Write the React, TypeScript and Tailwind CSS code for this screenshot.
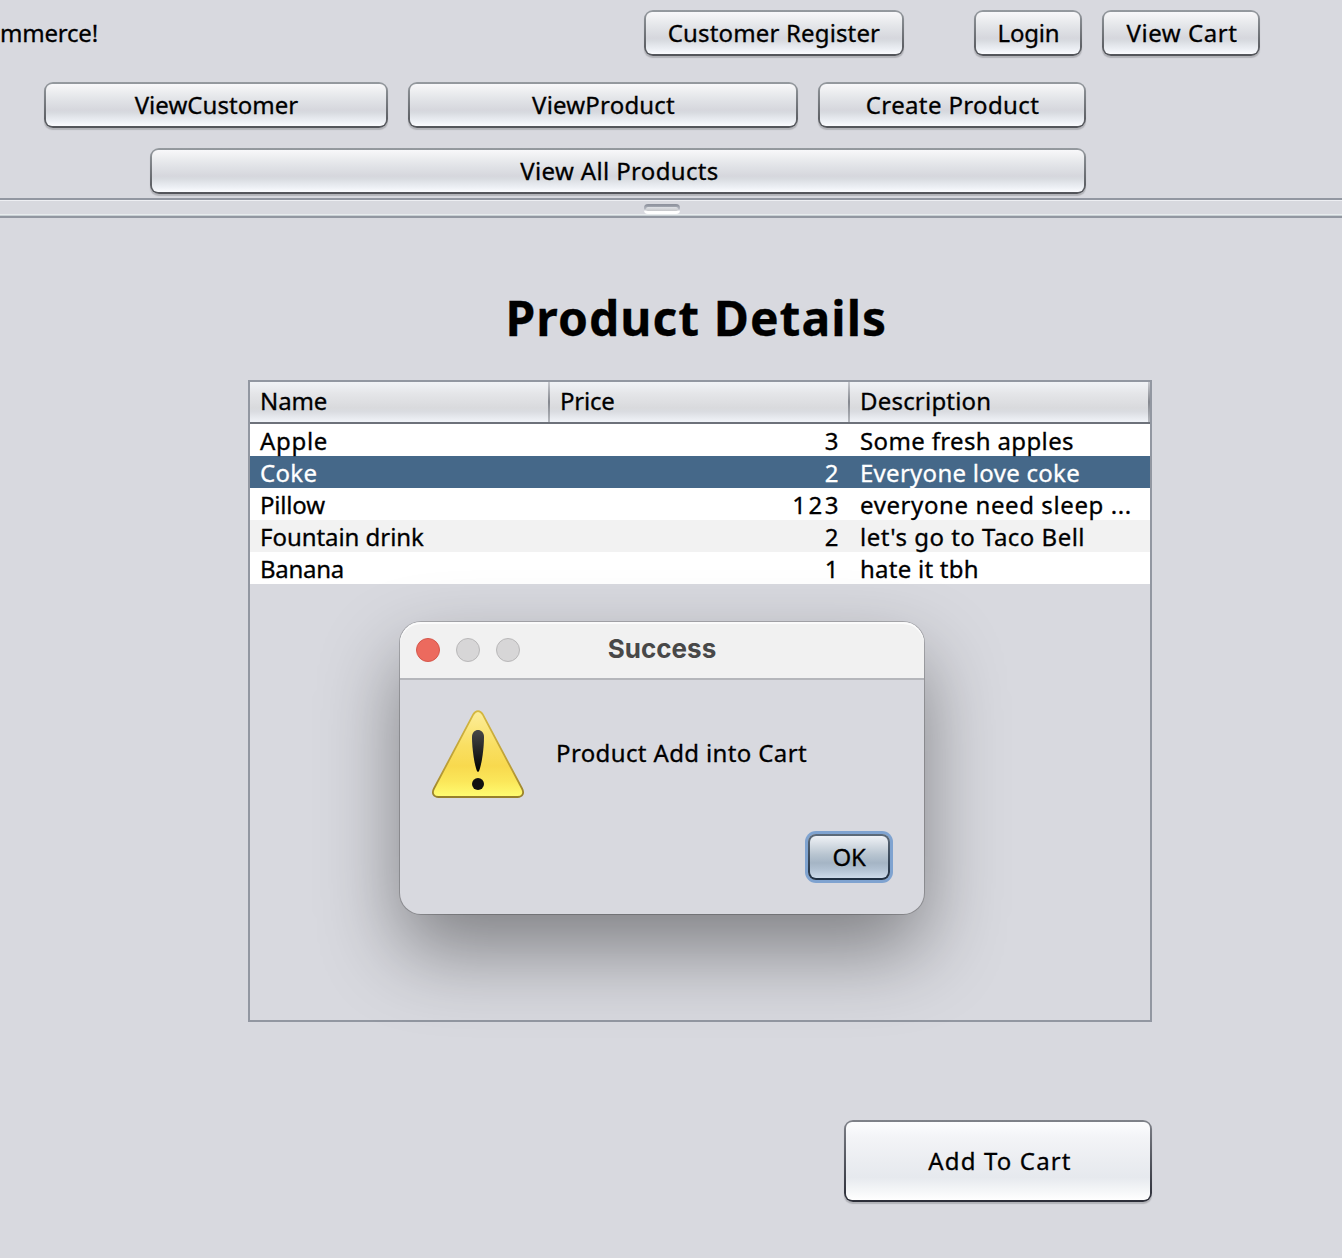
import type { ReactNode } from "react";

const frames = {
  normal:
    "rounded-[9px] bg-linear-to-b from-[#959a9f] to-[#525459] p-[2px] shadow-[0_2px_1px_-0.5px_#b2b3b8]",
  light:
    "rounded-[9px] bg-linear-to-b from-[#7f8289] to-[#2c2e38] p-[2px] shadow-[0_2px_1px_-0.5px_#b2b3b8]",
  focused:
    "rounded-[8px] bg-linear-to-b from-[#5d6b7a] to-[#1f2f42] p-[2px] shadow-[0_0_0_3px_#7fa3d0]",
};

const fills = {
  normal:
    "bg-[linear-gradient(to_bottom,#f8f8fa_0%,#eeeff1_16%,#e1e3e7_38%,#d6d7dd_62%,#d8dbe0_68%,#eceff4_88%,#fbfcff_100%)]",
  light:
    "bg-[linear-gradient(to_bottom,#fcfdfe_0%,#f3f4f7_20%,#ebedf1_50%,#e6e9ee_71%,#f2f4f6_85%,#ffffff_100%)]",
  focused:
    "bg-[linear-gradient(to_bottom,#eff2f6_0%,#d0d8e0_25%,#b7c4d0_45%,#a5b5c5_64%,#b0c0d1_78%,#cddbea_100%)]",
};

function Button({
  children,
  size,
  spacing,
  variant = "normal",
}: {
  children: ReactNode;
  size: string;
  spacing: string;
  variant?: "normal" | "light" | "focused";
}) {
  return (
    <button className={`block shrink-0 ${frames[variant]} ${size}`}>
      <span className={`flex h-full items-center justify-center rounded-[6px] ${fills[variant]} ${spacing}`}>
        {children}
      </span>
    </button>
  );
}

const rows = [
  { name: "Apple", ns: "tracking-[0.7px]", price: "3", desc: "Some fresh apples", ds: "tracking-[0.35px]", tone: "bg-white" },
  { name: "Coke", ns: "tracking-[0.3px]", price: "2", desc: "Everyone love coke", ds: "tracking-[0.28px]", tone: "bg-[#456889] text-white" },
  { name: "Pillow", ns: "tracking-[-0.2px]", price: "123", desc: "everyone need sleep ...", ds: "tracking-[0.6px]", tone: "bg-white" },
  { name: "Fountain drink", ns: "tracking-[-0.05px]", price: "2", desc: "let's go to Taco Bell", ds: "tracking-[0.48px]", tone: "bg-[#f2f2f2]" },
  { name: "Banana", ns: "tracking-[-0.3px]", price: "1", desc: "hate it tbh", ds: "tracking-[0.25px]", tone: "bg-white" },
];

const headers = [
  { label: "Name", spacing: "tracking-[-0.1px]" },
  { label: "Price", spacing: "tracking-[-0.2px]" },
  { label: "Description", spacing: "tracking-[0.2px]" },
];

function ProductTable() {
  return (
    <div className="h-[642px] w-[904px] border-2 border-[#9297a1]">
      <div className="flex h-[42px] border-b-2 border-[#6d717a] bg-[linear-gradient(to_bottom,#f1f3f6_0%,#e4e5e8_30%,#d9dadd_65%,#dadce1_74%,#f1f4f9_100%)]">
        {headers.map((h) => (
          <div key={h.label} className={`flex w-[300px] ${h.spacing}`}>
            <span className="w-[298px] pl-[10px] leading-[38px]">{h.label}</span>
            <span className="w-[2px] bg-linear-to-b from-[#c8cacf] via-[#85888f] to-[#b5b8be]" />
          </div>
        ))}
      </div>
      {rows.map((r) => (
        <div key={r.name} className={`flex h-8 leading-[34px] ${r.tone}`}>
          <span className={`w-[300px] pl-[10px] ${r.ns}`}>{r.name}</span>
          <span className="w-[300px] pr-[9px] text-right tracking-[2.5px]">{r.price}</span>
          <span className={`pl-[10px] ${r.ds}`}>{r.desc}</span>
        </div>
      ))}
    </div>
  );
}

function WarningIcon() {
  return (
    <svg width="92" height="90" viewBox="0 0 92 90" className="block">
      <defs>
        <linearGradient id="sign" x1="0" y1="0" x2="0" y2="1">
          <stop offset="0" stopColor="#fcee9c" />
          <stop offset="0.4" stopColor="#f9df62" />
          <stop offset="0.64" stopColor="#f8d94e" />
          <stop offset="0.82" stopColor="#fbe75a" />
          <stop offset="1" stopColor="#fffd72" />
        </linearGradient>
        <linearGradient id="rim" x1="0" y1="0" x2="0" y2="1">
          <stop offset="0" stopColor="#d5b83f" />
          <stop offset="0.7" stopColor="#b89b36" />
          <stop offset="1" stopColor="#97802a" />
        </linearGradient>
        <linearGradient id="mark" x1="0" y1="0" x2="0" y2="1">
          <stop offset="0" stopColor="#484848" />
          <stop offset="1" stopColor="#000000" />
        </linearGradient>
      </defs>
      <path
        d="M41.4 4.2 C43.8 0 48.2 0 50.6 4.2 L90 78.5 C92.6 83.5 90.3 87 85.5 87 H6.5 C1.7 87 -0.6 83.5 2 78.5 Z"
        fill="url(#sign)"
        stroke="url(#rim)"
        strokeWidth="1.8"
      />
      <path d="M40 27 C40 17.7 52 17.7 52 27 C52 42 48.2 62 46 62 C43.8 62 40 42 40 27 Z" fill="url(#mark)" />
      <circle cx="46" cy="74" r="6" fill="#111111" />
    </svg>
  );
}

function SuccessDialog() {
  return (
    <div className="absolute top-[622px] left-[400px] h-[292px] w-[524px] overflow-visible rounded-[21px] bg-[#d8d9df] shadow-[0_0_0_1px_rgba(0,0,0,0.2),0_36px_80px_rgba(0,0,0,0.41)]">
      <div className="grid h-[58px] grid-cols-[1fr_auto_1fr] items-center rounded-t-[21px] border-b-2 border-[#b5b6bb] bg-[#f1f1f1] px-4 shadow-[inset_0_2px_0_#fbfbfb]">
        <div className="flex gap-4">
          <span className="size-6 rounded-full border border-[#d5574b] bg-[#ec6a5e]" />
          <span className="size-6 rounded-full border border-[#b9b8b9] bg-[#d7d6d7]" />
          <span className="size-6 rounded-full border border-[#b9b8b9] bg-[#d7d6d7]" />
        </div>
        <span className="relative -top-px font-[Inter] text-[26px] leading-8 font-bold text-[#484848] [-webkit-text-stroke:0]">Success</span>
      </div>
      <div className="flex pt-[30px] pl-8">
        <WarningIcon />
        <span className="pt-[24px] pl-[32px] leading-[38px] tracking-[0.37px]">Product Add into Cart</span>
      </div>
      <div className="mt-[34px] flex justify-end pr-[34px]">
        <Button size="h-[46px] w-[82px]" spacing="tracking-[-0.3px]" variant="focused">OK</Button>
      </div>
    </div>
  );
}

export default function App() {
  return (
    <div className="relative h-[1258px] w-[1342px] overflow-hidden bg-[#d8d9df] font-['Noto_Sans',sans-serif] text-[24px] leading-8 text-black [-webkit-text-stroke:0.3px]">
      <header className="flex h-[198px] flex-col pt-[10px]">
        <div className="flex h-[46px] items-center">
          <span className="w-[644px] tracking-[-0.2px]">mmerce!</span>
          <Button size="h-[46px] w-[260px]" spacing="tracking-[0.15px]">Customer Register</Button>
          <div className="ml-[70px] flex gap-5">
            <Button size="h-[46px] w-[108px]" spacing="pl-px tracking-[-0.2px]">Login</Button>
            <Button size="h-[46px] w-[158px]" spacing="pl-[2px] tracking-[0.55px]">View Cart</Button>
          </div>
        </div>
        <div className="mt-[26px] ml-[44px] flex gap-5">
          <Button size="h-[46px] w-[344px]" spacing="pl-px tracking-[0.05px]">ViewCustomer</Button>
          <Button size="h-[46px] w-[390px]" spacing="pl-px tracking-[0.19px]">ViewProduct</Button>
          <Button size="h-[46px] w-[268px]" spacing="pl-px tracking-[0.36px]">Create Product</Button>
        </div>
        <div className="mt-5 ml-[150px]">
          <Button size="h-[46px] w-[936px]" spacing="pl-[3px] tracking-[0.35px]">View All Products</Button>
        </div>
      </header>

      <div className="h-5 border-y-2 border-[#9297a1] pt-[4px] pl-[644px] shadow-[inset_0_1px_0_#eeeff3,inset_0_-1px_0_#c8d0d4,inset_0_-2px_0_#e8ecee]">
        <div className="h-[10px] w-9 rounded-[4px] bg-linear-to-b from-[#8f939e] from-10% via-[#b9bcc4] via-50% to-white to-75% px-[2px] pt-[3px]">
          <div className="h-[4px] rounded-[2px] bg-linear-to-b from-[#dfe1e6] to-[#c6c7ca]" />
        </div>
      </div>

      <main>
        <h1 className="pt-[62px] pl-[505.5px] text-[48px] leading-[76px] font-bold tracking-[1.04px] [-webkit-text-stroke:0.3px]">
          Product Details
        </h1>
        <div className="mt-[24px] ml-[248px]">
          <ProductTable />
          <div className="mt-[98px] ml-[596px]">
            <Button size="h-[82px] w-[308px]" spacing="pl-[4px] tracking-[1.15px]" variant="light">Add To Cart</Button>
          </div>
        </div>
      </main>

      <SuccessDialog />
    </div>
  );
}
